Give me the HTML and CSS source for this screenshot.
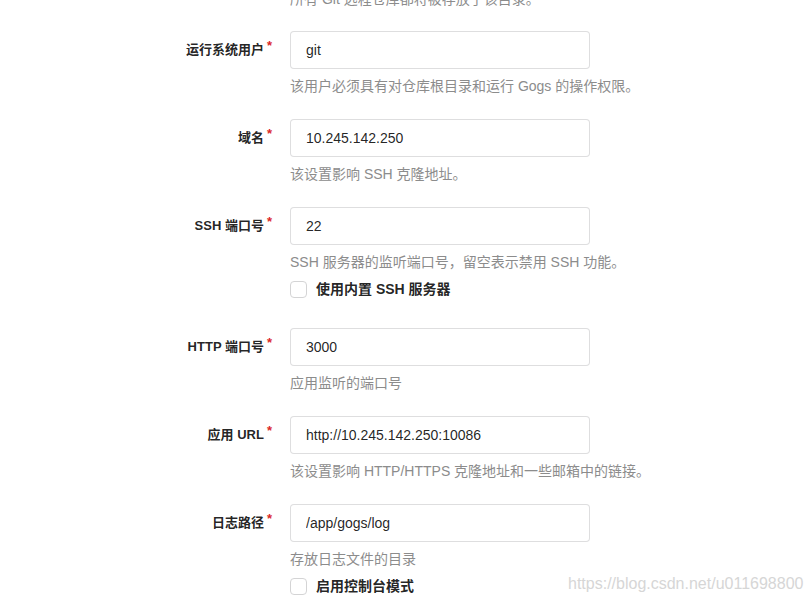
FILE: index.html
```html
<!DOCTYPE html>
<html lang="zh-CN">
<head>
<meta charset="utf-8">
<title>Gogs 安装</title>
<link rel="stylesheet" href="styles.css">
</head>
<body>
<form class="install">
  <div class="help help-prev">所有 Git 远程仓库都将被存放于该目录。</div>

  <div class="field">
    <label class="lbl">运行系统用户<span class="req">*</span></label>
    <input class="inp" type="text" value="git">
    <div class="help">该用户必须具有对仓库根目录和运行 Gogs 的操作权限。</div>
  </div>

  <div class="field">
    <label class="lbl">域名<span class="req">*</span></label>
    <input class="inp" type="text" value="10.245.142.250">
    <div class="help">该设置影响 SSH 克隆地址。</div>
  </div>

  <div class="field has-check">
    <label class="lbl">SSH 端口号<span class="req">*</span></label>
    <input class="inp" type="text" value="22">
    <div class="help">SSH 服务器的监听端口号，留空表示禁用 SSH 功能。</div>
    <div class="check"><span class="box"></span><strong>使用内置 SSH 服务器</strong></div>
  </div>

  <div class="field">
    <label class="lbl">HTTP 端口号<span class="req">*</span></label>
    <input class="inp" type="text" value="3000">
    <div class="help">应用监听的端口号</div>
  </div>

  <div class="field">
    <label class="lbl">应用 URL<span class="req">*</span></label>
    <input class="inp" type="text" value="http://10.245.142.250:10086">
    <div class="help">该设置影响 HTTP/HTTPS 克隆地址和一些邮箱中的链接。</div>
  </div>

  <div class="field has-check">
    <label class="lbl">日志路径<span class="req">*</span></label>
    <input class="inp" type="text" value="/app/gogs/log">
    <div class="help">存放日志文件的目录</div>
    <div class="check"><span class="box"></span><strong>启用控制台模式</strong></div>
  </div>
</form>
<div class="watermark">https://blog.csdn.net/u011698800</div>
</body>
</html>
```

FILE: styles.css
```css
html, body {
  margin: 0;
  padding: 0;
  background: #ffffff;
  overflow: hidden;
}
body {
  width: 812px;
  height: 604px;
  position: relative;
  font-family: "Liberation Sans", "Noto Sans CJK SC", sans-serif;
  font-size: 14px;
  color: rgba(0, 0, 0, 0.87);
}
.install {
  display: flex;
  flex-direction: column;
}
.help {
  color: #8c8c8c;
  font-size: 14px;
  line-height: 20px;
  margin-top: 7px;
  grid-column: 2;
  white-space: nowrap;
}
.help-prev {
  margin-top: -11px;
  margin-left: 290px;
  margin-bottom: 22px;
}
.field {
  display: grid;
  grid-template-columns: 290px 300px;
  align-items: center;
  margin-bottom: 23px;
}
.field.has-check {
  margin-bottom: 30px;
}
.lbl {
  grid-column: 1;
  text-align: right;
  padding-right: 18px;
  padding-bottom: 4px;
  font-size: 13px;
  font-weight: bold;
  color: rgba(0, 0, 0, 0.87);
  white-space: nowrap;
}
.req {
  color: #db2828;
  margin-left: 3px;
  vertical-align: 4px;
  font-size: 13px;
}
.inp {
  grid-column: 2;
  box-sizing: border-box;
  width: 300px;
  height: 38px;
  margin: 0;
  padding: 0 15px;
  border: 1px solid rgba(34, 36, 38, 0.15);
  border-radius: 4px;
  background: #ffffff;
  font-family: "Liberation Sans", "Noto Sans CJK SC", sans-serif;
  font-size: 14px;
  color: rgba(0, 0, 0, 0.87);
  outline: none;
}
.check {
  grid-column: 2;
  display: flex;
  align-items: center;
  margin-top: 9px;
  height: 17px;
  font-size: 14px;
  line-height: 17px;
  color: rgba(0, 0, 0, 0.87);
  white-space: nowrap;
}
.box {
  box-sizing: border-box;
  width: 17px;
  height: 17px;
  border: 1px solid #d4d4d5;
  border-radius: 4px;
  background: #ffffff;
  margin-right: 9px;
  flex: none;
}
.watermark {
  position: absolute;
  left: 568px;
  top: 574px;
  font-family: "Liberation Sans", sans-serif;
  font-size: 16px;
  line-height: 20px;
  color: #d6d6d6;
  white-space: nowrap;
}
```
